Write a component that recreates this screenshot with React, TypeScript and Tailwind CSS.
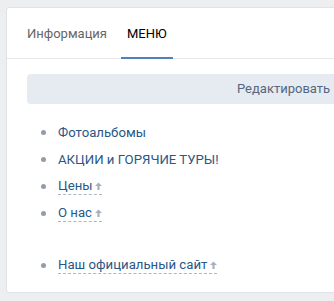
import React from "react";

const Arrow = () => (
  <svg width="7" height="8" viewBox="0 0 7 8" className="ml-[3px] inline-block">
    <path d="M3.5 0.5 L7 4 H4.6 V8 H2.4 V4 H0 Z" fill="#a6b1bf" />
  </svg>
);

const items: { label: string; link?: boolean; gap?: boolean }[] = [
  { label: "Фотоальбомы" },
  { label: "АКЦИИ и ГОРЯЧИЕ ТУРЫ!" },
  { label: "Цены", link: true },
  { label: "О нас", link: true },
  { label: "Наш официальный сайт", link: true, gap: true },
];

export default function App() {
  return (
    <div
      className="w-[334px] h-[301px] overflow-hidden bg-[#edeef0] pl-[6px] pt-[7px]"
      style={{ fontFamily: "Roboto, 'Open Sans', sans-serif" }}
    >
      <div className="w-[360px] h-[286px] bg-white border border-[#dfe2e8] rounded-[3px]">
        {/* вкладки */}
        <div className="flex h-[51px] px-[14px] border-b border-[#e7e8ec] gap-[8px]">
          <div className="w-[92px] px-[6px] flex items-center text-[13px] text-[#656565] pt-[1px]">
            Информация
          </div>
          <div className="w-[52px] px-[6px] flex items-center text-[13px] text-black border-b-2 border-[#5181b8] mb-[-1px] pt-[3px]">
            МЕНЮ
          </div>
        </div>

        <div className="pl-[20px] pt-[15px]">
          <div className="h-[30px] bg-[#e5ebf1] rounded-[4px] flex items-center pl-[210px] text-[13px] text-[#55677d]">
            Редактировать
          </div>

          <ul className="mt-[15px] pl-[14px]">
            {items.map((it) => (
              <li
                key={it.label}
                className={`flex items-center h-[27px] text-[13.2px] text-[#2a5885] ${it.gap ? "mt-[25px]" : ""}`}
              >
                <span className="w-[5px] h-[5px] rounded-full bg-[#939cab] mr-[12px]" />
                {it.link ? (
                  <span className="flex items-center border-b border-dashed border-[#a8b7c9] leading-[16px]">
                    {it.label}
                    <Arrow />
                  </span>
                ) : (
                  <span className="leading-[16px]">{it.label}</span>
                )}
              </li>
            ))}
          </ul>
        </div>
      </div>
    </div>
  );
}
